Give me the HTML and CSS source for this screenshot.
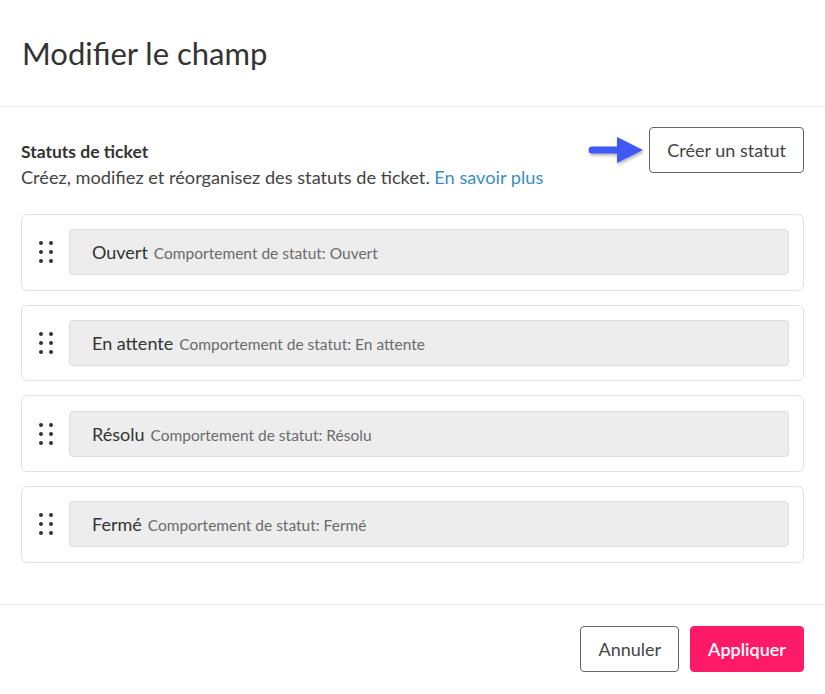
FILE: index.html
```html
<!DOCTYPE html>
<html lang="fr">
<head>
<meta charset="utf-8">
<title>Modifier le champ</title>
<link rel="stylesheet" href="styles.css">
</head>
<body>
<div class="modal">
  <header class="head">
    <h1 class="title">Modifier le champ</h1>
  </header>
  <main class="content">
    <div class="intro">
      <div class="intro-text">
        <div class="label">Statuts de ticket</div>
        <div class="desc">Créez, modifiez et réorganisez des statuts de ticket. <a class="link" href="#">En savoir plus</a></div>
      </div>
      <div class="create">
        <svg class="arrow" width="58" height="34" viewBox="0 0 58 34">
          <defs>
            <filter id="sh" x="-20%" y="-30%" width="140%" height="160%">
              <feDropShadow dx="1" dy="2" stdDeviation="1.5" flood-color="#000" flood-opacity="0.3"/>
            </filter>
          </defs>
          <g filter="url(#sh)">
            <line x1="4" y1="16" x2="32" y2="16" stroke="#3f59f4" stroke-width="7" stroke-linecap="round"/>
            <polygon points="29,3 55,16 29,29" fill="#3f59f4"/>
          </g>
        </svg>
        <button class="btn btn-outline">Créer un statut</button>
      </div>
    </div>
    <ul class="list">
      <li class="card">
        <span class="handle"><i></i><i></i><i></i><i></i><i></i><i></i></span>
        <div class="status"><span class="name">Ouvert</span><span class="meta">Comportement de statut: Ouvert</span></div>
      </li>
      <li class="card">
        <span class="handle"><i></i><i></i><i></i><i></i><i></i><i></i></span>
        <div class="status"><span class="name">En attente</span><span class="meta">Comportement de statut: En attente</span></div>
      </li>
      <li class="card">
        <span class="handle"><i></i><i></i><i></i><i></i><i></i><i></i></span>
        <div class="status"><span class="name">Résolu</span><span class="meta">Comportement de statut: Résolu</span></div>
      </li>
      <li class="card">
        <span class="handle"><i></i><i></i><i></i><i></i><i></i><i></i></span>
        <div class="status"><span class="name">Fermé</span><span class="meta">Comportement de statut: Fermé</span></div>
      </li>
    </ul>
  </main>
  <footer class="foot">
    <button class="btn btn-outline btn-cancel">Annuler</button>
    <button class="btn btn-primary">Appliquer</button>
  </footer>
</div>
</body>
</html>
```

FILE: styles.css
```css
* { box-sizing: border-box; }
html, body { margin: 0; padding: 0; background: #fff; }
body {
  font-family: "Lato", "Open Sans", "Liberation Sans", sans-serif;
  color: #333;
}
.modal { width: 825px; }
.head {
  height: 107px;
  border-bottom: 1px solid #ececec;
  display: flex;
  align-items: center;
  padding: 0 22px;
}
.title {
  margin: 0;
  font-weight: 400;
  font-size: 31px;
  color: #333;
}
.content { padding: 20px 21px 41px; }
.intro {
  display: flex;
  justify-content: space-between;
  align-items: flex-start;
}
.intro-text { padding-top: 13px; }
.label { font-weight: 700; font-size: 17.5px; line-height: 24px; color: #333; }
.desc { font-size: 18.2px; line-height: 26px; color: #444; }
.link { color: #3a8ec4; text-decoration: none; }
.create { display: flex; align-items: center; }
.arrow { margin-right: 3px; margin-top: 2px; }
.btn {
  font-family: inherit;
  font-size: 18px;
  height: 46px;
  border-radius: 4px;
  padding: 0 17px;
  cursor: pointer;
}
.btn-outline { background: #fff; border: 1px solid #666; color: #444; }
.btn-primary { background: #ff1a68; border: 1px solid #ff1a68; color: #fff; font-weight: 600; }
.list {
  list-style: none;
  margin: 24px 0 0;
  padding: 0;
  display: flex;
  flex-direction: column;
  gap: 14px;
}
.card {
  height: 76.7px;
  border: 1px solid #e2e2e2;
  border-radius: 6px;
  padding: 14px;
  display: flex;
  align-items: center;
  gap: 13px;
}
.handle {
  width: 20px;
  display: grid;
  grid-template-columns: 4px 4px;
  column-gap: 6px;
  row-gap: 5px;
  justify-content: center;
}
.handle i { width: 4px; height: 4px; border-radius: 50%; background: #333; display: block; }
.status {
  flex: 1;
  height: 46px;
  background: #ededed;
  border: 1px solid #dcdcdc;
  border-radius: 4px;
  padding: 0 22px;
  display: flex;
  align-items: center;
  gap: 6px;
}
.name { font-size: 18px; color: #333; }
.meta { font-size: 15.5px; color: #6b6b6b; padding-top: 2px; }
.foot {
  border-top: 1px solid #ececec;
  padding: 21px 21px;
  display: flex;
  justify-content: flex-end;
  gap: 11px;
}
.btn-cancel { padding: 0 17px; }
```
